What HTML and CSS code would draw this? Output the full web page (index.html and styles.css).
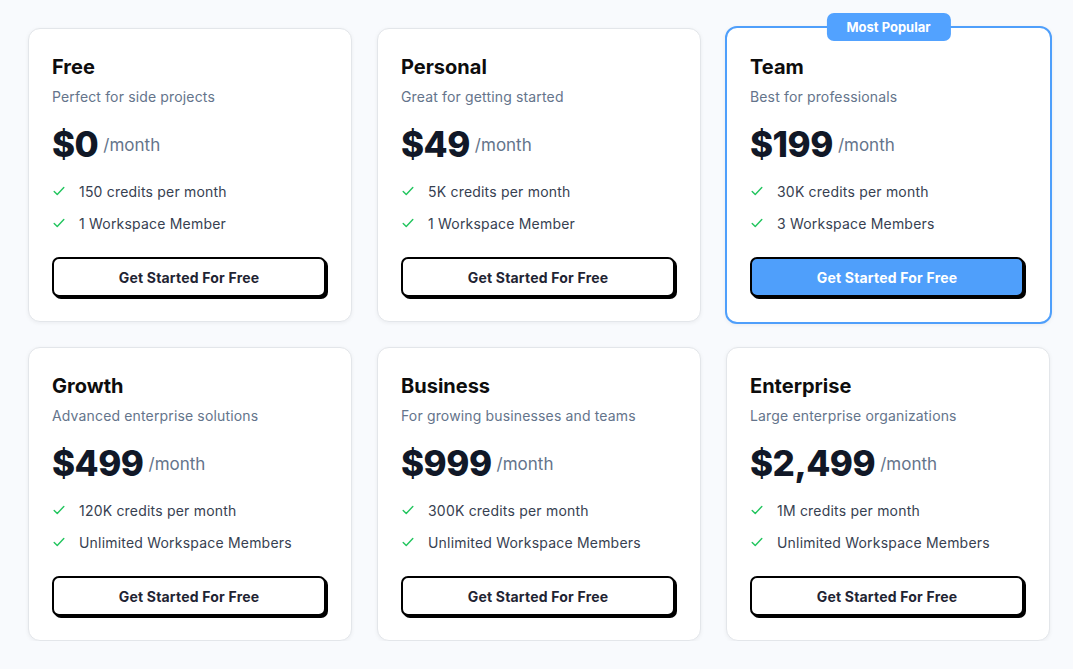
FILE: index.html
```html
<!DOCTYPE html>
<html lang="en">
<head>
  <meta charset="UTF-8" />
  <meta name="viewport" content="width=device-width, initial-scale=1" />
  <title>Pricing</title>
  <link rel="stylesheet" href="styles.css">
</head>
<body>
  <div class="pricing-grid">
    <div class="plan">
      <h3 class="plan-name">Free</h3>
      <p class="plan-desc">Perfect for side projects</p>
      <div class="plan-price"><span class="amount">$0</span><span class="period">/month</span></div>
      <ul class="features">
        <li><svg class="check" viewBox="0 0 16 16"><path d="M2.5 8.5l3.5 3.5 7.5-8"/></svg>150 credits per month</li>
        <li><svg class="check" viewBox="0 0 16 16"><path d="M2.5 8.5l3.5 3.5 7.5-8"/></svg>1 Workspace Member</li>
      </ul>
      <button class="plan-btn">Get Started For Free</button>
    </div>

    <div class="plan">
      <h3 class="plan-name">Personal</h3>
      <p class="plan-desc">Great for getting started</p>
      <div class="plan-price"><span class="amount">$49</span><span class="period">/month</span></div>
      <ul class="features">
        <li><svg class="check" viewBox="0 0 16 16"><path d="M2.5 8.5l3.5 3.5 7.5-8"/></svg>5K credits per month</li>
        <li><svg class="check" viewBox="0 0 16 16"><path d="M2.5 8.5l3.5 3.5 7.5-8"/></svg>1 Workspace Member</li>
      </ul>
      <button class="plan-btn">Get Started For Free</button>
    </div>

    <div class="plan popular">
      <span class="badge">Most Popular</span>
      <h3 class="plan-name">Team</h3>
      <p class="plan-desc">Best for professionals</p>
      <div class="plan-price"><span class="amount">$199</span><span class="period">/month</span></div>
      <ul class="features">
        <li><svg class="check" viewBox="0 0 16 16"><path d="M2.5 8.5l3.5 3.5 7.5-8"/></svg>30K credits per month</li>
        <li><svg class="check" viewBox="0 0 16 16"><path d="M2.5 8.5l3.5 3.5 7.5-8"/></svg>3 Workspace Members</li>
      </ul>
      <button class="plan-btn">Get Started For Free</button>
    </div>

    <div class="plan">
      <h3 class="plan-name">Growth</h3>
      <p class="plan-desc">Advanced enterprise solutions</p>
      <div class="plan-price"><span class="amount">$499</span><span class="period">/month</span></div>
      <ul class="features">
        <li><svg class="check" viewBox="0 0 16 16"><path d="M2.5 8.5l3.5 3.5 7.5-8"/></svg>120K credits per month</li>
        <li><svg class="check" viewBox="0 0 16 16"><path d="M2.5 8.5l3.5 3.5 7.5-8"/></svg>Unlimited Workspace Members</li>
      </ul>
      <button class="plan-btn">Get Started For Free</button>
    </div>

    <div class="plan">
      <h3 class="plan-name">Business</h3>
      <p class="plan-desc">For growing businesses and teams</p>
      <div class="plan-price"><span class="amount">$999</span><span class="period">/month</span></div>
      <ul class="features">
        <li><svg class="check" viewBox="0 0 16 16"><path d="M2.5 8.5l3.5 3.5 7.5-8"/></svg>300K credits per month</li>
        <li><svg class="check" viewBox="0 0 16 16"><path d="M2.5 8.5l3.5 3.5 7.5-8"/></svg>Unlimited Workspace Members</li>
      </ul>
      <button class="plan-btn">Get Started For Free</button>
    </div>

    <div class="plan">
      <h3 class="plan-name">Enterprise</h3>
      <p class="plan-desc">Large enterprise organizations</p>
      <div class="plan-price"><span class="amount">$2,499</span><span class="period">/month</span></div>
      <ul class="features">
        <li><svg class="check" viewBox="0 0 16 16"><path d="M2.5 8.5l3.5 3.5 7.5-8"/></svg>1M credits per month</li>
        <li><svg class="check" viewBox="0 0 16 16"><path d="M2.5 8.5l3.5 3.5 7.5-8"/></svg>Unlimited Workspace Members</li>
      </ul>
      <button class="plan-btn">Get Started For Free</button>
    </div>
  </div>
</body>
</html>
```

FILE: styles.css
```css
body {
  font-family: Inter, "Noto Sans", sans-serif;
  background-color: #f8fafd;
  margin: 0;
  color: #111;
}

.pricing-grid {
  display: grid;
  grid-template-columns: repeat(3, 324px);
  column-gap: 25px;
  row-gap: 25px;
  padding: 28px 0 0 28px;
}

.plan {
  position: relative;
  background-color: #fff;
  border: 1px solid #e3e6ea;
  border-radius: 12px;
  box-shadow: 0 1px 4px rgba(15, 23, 42, 0.06);
  padding: 23px 23px 24px 23px;
  display: flex;
  flex-direction: column;
}

/* sits a little bigger than its neighbours */
.plan.popular {
  margin: -2px -2px -2px -1px;
  border: 2px solid #4f9ffb;
  padding: 24px 24px 25px 23px;
}

.badge {
  position: absolute;
  top: -15px;
  left: 50%;
  transform: translateX(-50%);
  background-color: #52a2ff;
  color: #fff;
  font-size: 13px;
  font-weight: 700;
  padding: 6px 20px;
  border-radius: 7px;
  line-height: 16px;
  white-space: nowrap;
}

.plan-name {
  margin: 0;
  font-size: 20px;
  font-weight: 700;
  line-height: 30px;
  color: #0d0d0d;
}

.plan-desc {
  margin: 0;
  font-size: 14px;
  line-height: 30px;
  color: #64748b;
  letter-spacing: 0.15px;
}

.plan-price {
  display: flex;
  align-items: center;
  gap: 5px;
  margin-top: 8px;
  height: 48px;
}

.amount {
  font-size: 35px;
  font-weight: 800;
  color: #111827;
  letter-spacing: -0.5px;
  line-height: 48px;
}

.period {
  font-size: 17px;
  color: #64748b;
  padding-top: 2px;
}

.features {
  list-style: none;
  margin: 7px 0 0 0;
  padding: 0;
}

.features li {
  display: flex;
  align-items: center;
  font-size: 14px;
  color: #374151;
  height: 32px;
  letter-spacing: 0.2px;
}

.check {
  width: 14px;
  height: 14px;
  margin-right: 13px;
  fill: none;
  stroke: #22c55e;
  stroke-width: 1.6;
  stroke-linecap: round;
  stroke-linejoin: round;
}

.plan-btn {
  margin-top: 18px;
  height: 40px;
  width: 274px;
  border: 2px solid #000;
  border-radius: 7px;
  box-shadow: 2px 2px 0 #000;
  background-color: #fff;
  color: #1f2433;
  font-family: inherit;
  font-size: 14px;
  font-weight: 700;
  letter-spacing: 0.2px;
  cursor: pointer;
}

.popular .plan-btn {
  background-color: #4f9ffb;
  color: #fff;
}
```
